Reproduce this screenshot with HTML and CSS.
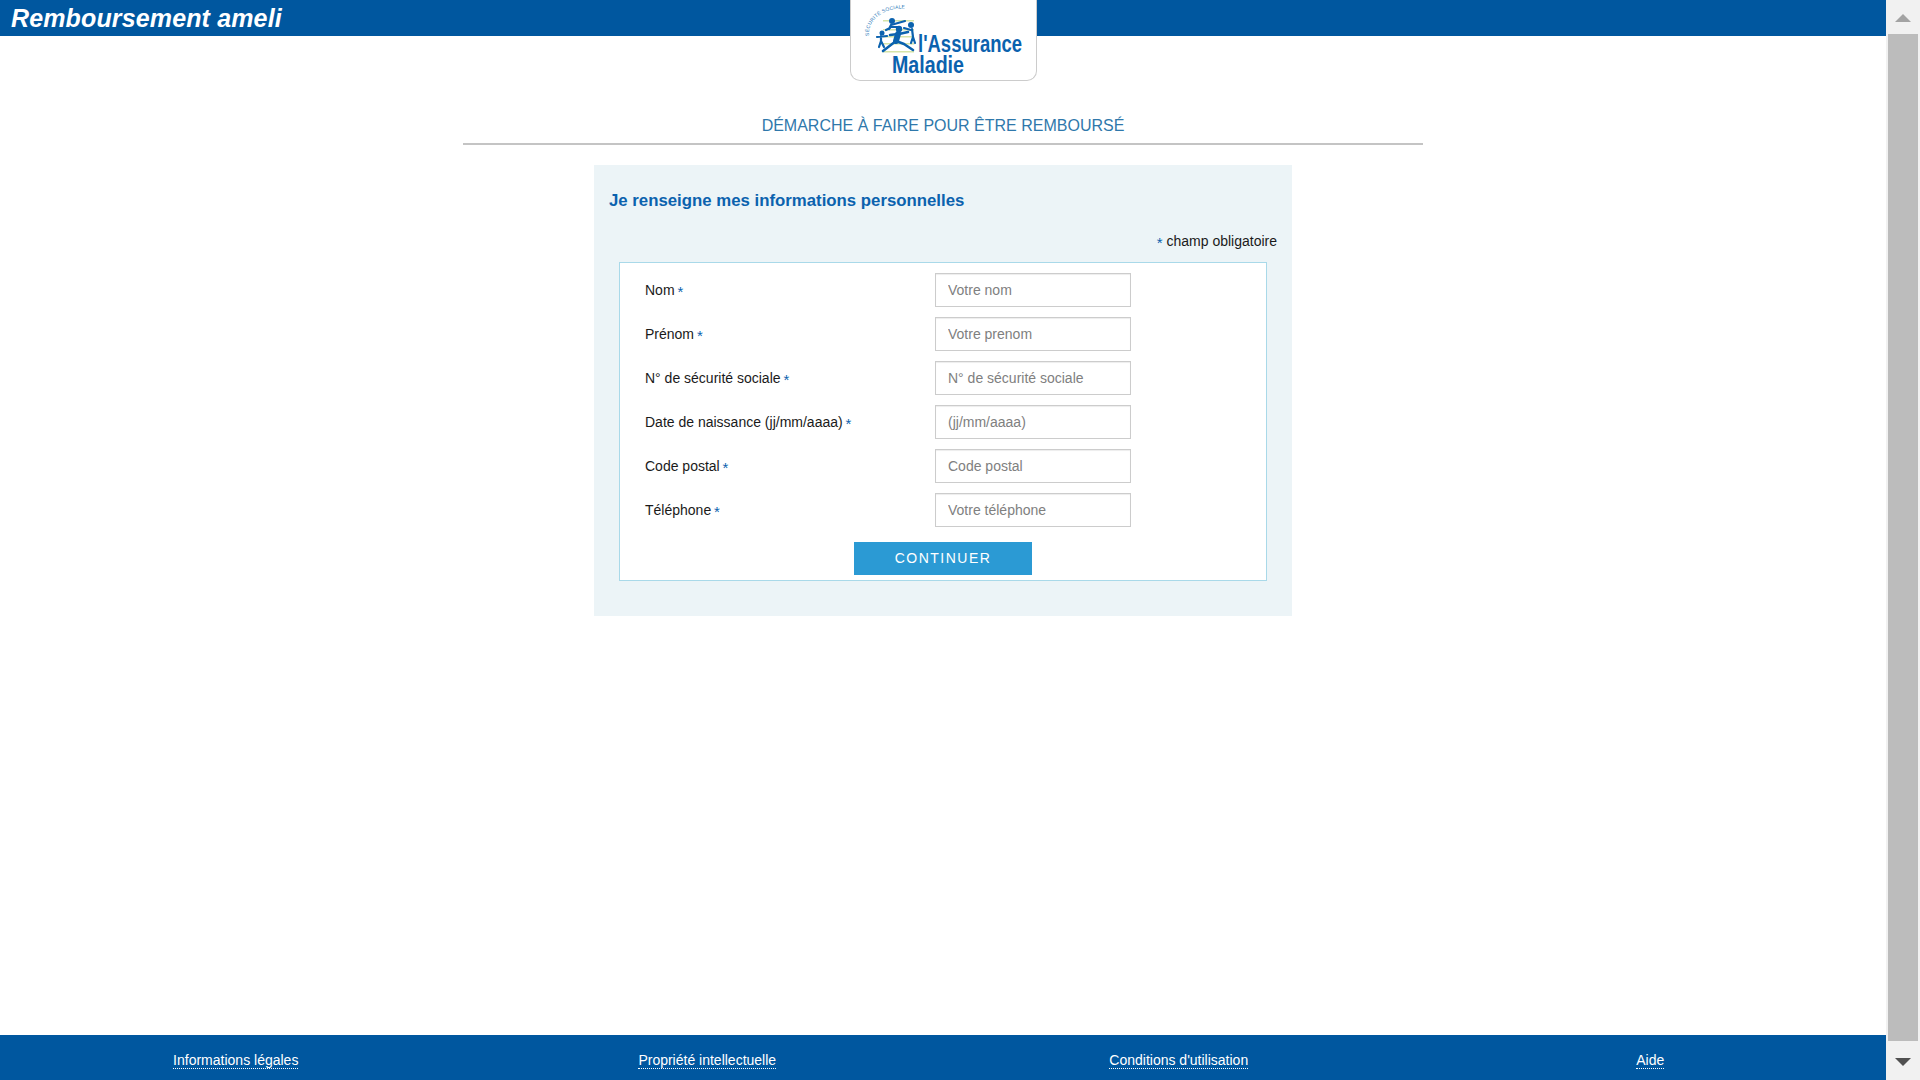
FILE: index.html
```html
<!DOCTYPE html>
<html lang="fr">
<head>
<meta charset="utf-8">
<title>Remboursement ameli</title>
<link rel="stylesheet" href="styles.css">
</head>
<body>
<div class="page">
  <header class="topbar">
    <h1 class="brand">Remboursement ameli</h1>
    <div class="logo-card">
      <svg class="logo" width="187" height="81" viewBox="0 0 187 81">
        <defs><path id="arc" d="M19 36 C17 22 32 6 58 9"/></defs>
        <g class="stripes">
          <rect x="33" y="20" width="31" height="1.5"/>
          <rect x="33" y="29" width="31" height="1.5"/>
          <rect x="33" y="36" width="31" height="1.5"/>
          <rect x="33" y="43" width="31" height="1.5"/>
          <rect x="33" y="51" width="31" height="1.5"/>
        </g>
        <text class="arc-text"><textPath href="#arc">SÉCURITÉ SOCIALE</textPath></text>
        <g class="people">
          <circle cx="42" cy="21" r="3"/>
          <path class="mid" d="M41 25 L39 29 M41 25 L55 21 M40 28 L36 30 M41 27 L49 27"/>
          <circle cx="61" cy="25" r="3"/>
          <path class="mid" d="M62 29 L63 37 M63 37 L61 43 M63 37 L65 43 M61 30 L54 28"/>
          <circle cx="32" cy="33" r="2.5"/>
          <path class="mid" d="M31 36 L31 41 M31 41 L29 47 M31 41 L34 47 M27 37 L37 36"/>
          <circle cx="49" cy="29" r="3.2"/>
          <path class="thick" d="M48 34 L46 41"/>
          <path d="M46 41 L33 51 M46 41 L54 44 L63 50 M49 34 L58 32 M48 34 L40 35"/>
        </g>
        <text class="word" x="68" y="52" textLength="104" lengthAdjust="spacingAndGlyphs">l'Assurance</text>
        <text class="word" x="42" y="73" textLength="72" lengthAdjust="spacingAndGlyphs">Maladie</text>
      </svg>
    </div>
  </header>

  <main class="content">
    <h2 class="step-title">DÉMARCHE À FAIRE POUR ÊTRE REMBOURSÉ</h2>
    <section class="panel">
      <h3 class="panel-title">Je renseigne mes informations personnelles</h3>
      <p class="required-note"><span class="star">*</span> champ obligatoire</p>
      <form class="form-box">
        <div class="row"><label class="label">Nom <span class="star">*</span></label><input class="field" placeholder="Votre nom"></div>
        <div class="row"><label class="label">Prénom <span class="star">*</span></label><input class="field" placeholder="Votre prenom"></div>
        <div class="row"><label class="label">N° de sécurité sociale <span class="star">*</span></label><input class="field" placeholder="N° de sécurité sociale"></div>
        <div class="row"><label class="label">Date de naissance (jj/mm/aaaa) <span class="star">*</span></label><input class="field" placeholder="(jj/mm/aaaa)"></div>
        <div class="row"><label class="label">Code postal <span class="star">*</span></label><input class="field" placeholder="Code postal"></div>
        <div class="row"><label class="label">Téléphone <span class="star">*</span></label><input class="field" placeholder="Votre téléphone"></div>
        <button class="submit" type="button">CONTINUER</button>
      </form>
    </section>
  </main>

  <footer class="footer">
    <div class="foot-cell"><a class="foot-link" href="#">Informations légales</a></div>
    <div class="foot-cell"><a class="foot-link" href="#">Propriété intellectuelle</a></div>
    <div class="foot-cell"><a class="foot-link" href="#">Conditions d'utilisation</a></div>
    <div class="foot-cell"><a class="foot-link" href="#">Aide</a></div>
  </footer>
</div>
<aside class="scrollbar">
  <div class="sb-btn"><span class="tri-up"></span></div>
  <div class="sb-thumb"></div>
  <div class="sb-btn sb-btn-end"><span class="tri-down"></span></div>
</aside>
</body>
</html>
```
FILE: styles.css
```css
* { box-sizing: border-box; }
html, body { margin: 0; height: 100%; }
body {
  display: flex;
  height: 100vh;
  overflow: hidden;
  font-family: "Liberation Sans", Arial, sans-serif;
  font-size: 14px;
  color: #1a1a1a;
  background: #fff;
}
.page { flex: 1; min-width: 0; display: flex; flex-direction: column; position: relative; }

.topbar { height: 36px; background: #00579f; position: relative; flex: none; padding-left: 11px; }
.brand { margin: 0; font-size: 25px; line-height: 36px; font-weight: bold; font-style: italic; letter-spacing: .14px; color: #fff; }
.logo-card {
  position: absolute; top: 0; left: 850px; width: 187px; height: 81px;
  background: #fff; border: 1px solid #ccc; border-top: 0;
  border-radius: 0 0 10px 10px; overflow: hidden;
}
.logo { display: block; margin-left: -1px; }
.stripes rect { fill: #d5e4a8; }
.arc-text { font-family: "Liberation Sans", sans-serif; font-size: 5px; letter-spacing: .2px; fill: #2b78b8; }
.people { fill: #0b62ae; stroke: #0b62ae; stroke-width: 2.6; stroke-linecap: round; stroke-linejoin: round; }
.people circle { stroke: none; }
.people path { fill: none; }
.people .mid { stroke-width: 2.2; }
.people .thick { stroke-width: 6; }
.word { font-family: "Liberation Sans Narrow", "Liberation Sans", sans-serif; font-weight: bold; font-size: 23px; fill: #0b62ae; }

.content { flex: 1; display: flex; flex-direction: column; align-items: center; }
.step-title {
  width: 960px; margin: 79px 0 20px; height: 30px; padding-top: 1px;
  border-bottom: 2px solid #c4c4c4; text-align: center;
  font-size: 16px; line-height: 20px; font-weight: normal; color: #2f78ab;
}
.panel { width: 698px; height: 451px; background: #ecf4f7; padding: 26px 15px 0; }
.panel-title { margin: 0; font-size: 16.8px; line-height: 20px; font-weight: bold; color: #0b62ae; }
.required-note { margin: 21px 0 0; text-align: right; font-size: 14px; line-height: 18px; color: #1a1a1a; }
.star { color: #0b62ae; font-size: 15px; line-height: 0; vertical-align: -2px; margin-left: -1px; }
.required-note .star { margin-left: 0; }
.form-box {
  margin: 12px 10px 0; width: 648px; height: 319px;
  background: #fff; border: 1px solid #a9d9e9;
  padding: 10px 0 0 25px;
  display: flex; flex-direction: column; gap: 10px;
}
.row { display: flex; align-items: center; height: 34px; }
.label { width: 290px; flex: none; }
.field {
  width: 196px; height: 34px; padding: 0 12px;
  border: 1px solid #ccc; border-radius: 0; outline: 0;
  box-shadow: inset 0 1px 1px rgba(0,0,0,.075);
  font: 14px "Liberation Sans", Arial, sans-serif; color: #555; background: #fff;
}
.field::placeholder { color: #808080; opacity: 1; }
.submit {
  align-self: flex-start; margin: 5px 0 0 209px; width: 178px; height: 33px; padding-bottom: 2px;
  background: #2b9ad4; border: 0; color: #fff;
  font: 14px "Liberation Sans", Arial, sans-serif; letter-spacing: 1.5px;
}

.footer { height: 45px; flex: none; background: #00579f; display: grid; grid-template-columns: repeat(4, 1fr); padding-top: 16px; }
.foot-cell { text-align: center; line-height: 18px; }
.foot-link { color: #fff; text-decoration: none; border-bottom: 1px dotted #fff; }

.scrollbar { width: 34px; flex: none; background: #f1f1f1; display: flex; flex-direction: column; align-items: center; }
.sb-btn { height: 34px; flex: none; display: flex; justify-content: center; padding-top: 14px; }
.sb-btn-end { height: 39px; padding-top: 17px; }
.sb-thumb { flex: 1; width: 30px; background: #bcbcbc; }
.tri-up { width: 0; height: 0; border: 8px solid transparent; border-top: 0; border-bottom-color: #a3a3a3; }
.tri-down { width: 0; height: 0; border: 8px solid transparent; border-bottom: 0; border-top-color: #505050; }
```
